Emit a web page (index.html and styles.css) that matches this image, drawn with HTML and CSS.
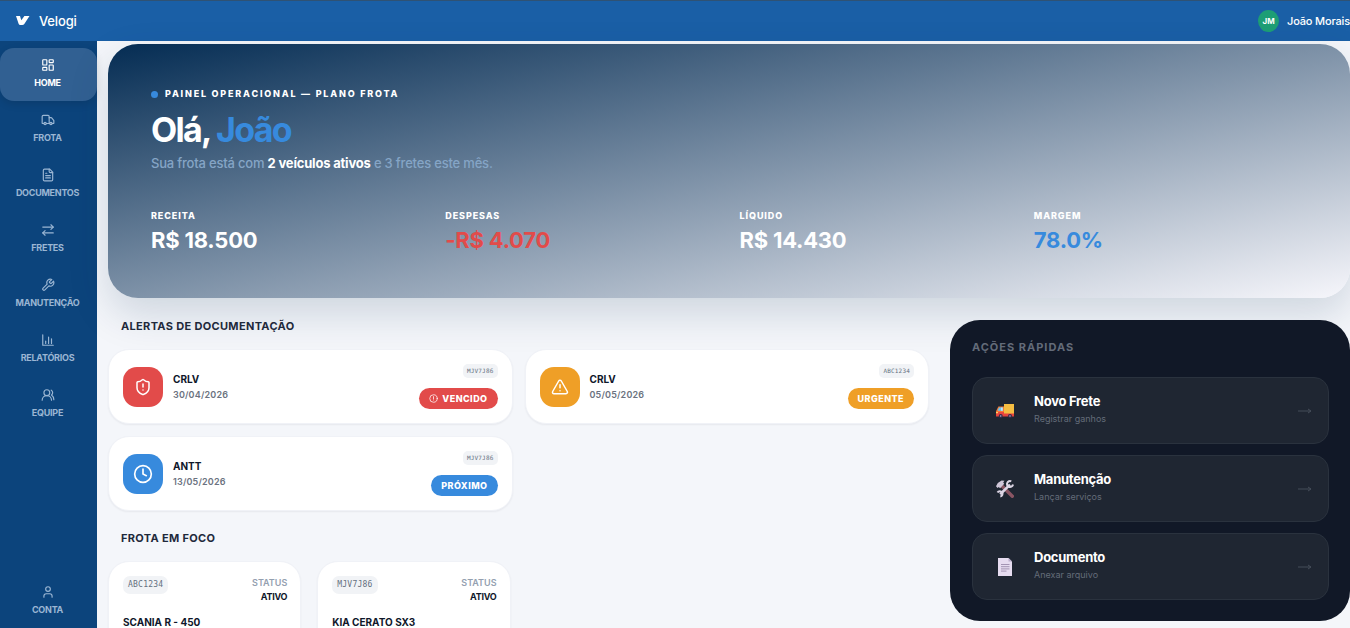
FILE: index.html
```html
<!DOCTYPE html>
<html lang="pt-BR">
<head>
  <meta charset="UTF-8">
  <meta name="viewport" content="width=device-width, initial-scale=1">
  <title>Velogi</title>
  <link rel="stylesheet" href="styles.css">
</head>
<body>

  <header class="topbar">
    <a href="#" class="brand">
      <svg class="brand-logo" viewBox="0 0 14 11" aria-hidden="true"><path d="M0 1h4l1.300 4.200L8.400 1H13.500L8.300 9Q7.600 10 6.200 10H4.300Q3 10 2.600 8.800z" fill="#fff"/></svg>
      <span>Velogi</span>
    </a>
    <div class="user">
      <span class="avatar">JM</span>
      <span>João Morais</span>
    </div>
  </header>

  <div class="layout">
    <nav class="sidebar">
      <a href="#" class="nav-item active">
        <svg class="icon" viewBox="0 0 24 24"><rect x="3" y="3" width="7" height="9" rx="1"/><rect x="14" y="3" width="7" height="5" rx="1"/><rect x="14" y="12" width="7" height="9" rx="1"/><rect x="3" y="16" width="7" height="5" rx="1"/></svg>
        <span>HOME</span>
      </a>
      <a href="#" class="nav-item">
        <svg class="icon" viewBox="0 0 24 24"><path d="M14 18V6a2 2 0 0 0-2-2H4a2 2 0 0 0-2 2v11a1 1 0 0 0 1 1h2"/><path d="M15 18H9"/><path d="M19 18h2a1 1 0 0 0 1-1v-3.650a1 1 0 0 0-.22-.624l-3.480-4.350A1 1 0 0 0 17.520 8H14"/><circle cx="17" cy="18" r="2"/><circle cx="7" cy="18" r="2"/></svg>
        <span>FROTA</span>
      </a>
      <a href="#" class="nav-item">
        <svg class="icon" viewBox="0 0 24 24"><path d="M15 2H6a2 2 0 0 0-2 2v16a2 2 0 0 0 2 2h12a2 2 0 0 0 2-2V7z"/><path d="M14 2v4a2 2 0 0 0 2 2h4"/><path d="M10 9H8"/><path d="M16 13H8"/><path d="M16 17H8"/></svg>
        <span>DOCUMENTOS</span>
      </a>
      <a href="#" class="nav-item">
        <svg class="icon" viewBox="0 0 24 24"><path d="m17 3 4 4-4 4"/><path d="M3 7h18"/><path d="m7 21-4-4 4-4"/><path d="M21 17H3"/></svg>
        <span>FRETES</span>
      </a>
      <a href="#" class="nav-item">
        <svg class="icon" viewBox="0 0 24 24"><path d="M14.700 6.300a1 1 0 0 0 0 1.400l1.600 1.600a1 1 0 0 0 1.400 0l3.770-3.770a6 6 0 0 1-7.940 7.940l-6.910 6.910a2.120 2.120 0 0 1-3-3l6.910-6.910a6 6 0 0 1 7.940-7.940l-3.760 3.760z"/></svg>
        <span>MANUTENÇÃO</span>
      </a>
      <a href="#" class="nav-item">
        <svg class="icon" viewBox="0 0 24 24"><path d="M3 3v18h18"/><path d="M8 18v-4"/><path d="M13 18V7"/><path d="M18 18V10"/></svg>
        <span>RELATÓRIOS</span>
      </a>
      <a href="#" class="nav-item">
        <svg class="icon" viewBox="0 0 24 24"><path d="M18 21a8 8 0 0 0-16 0"/><circle cx="10" cy="8" r="5"/><path d="M22 20c0-3.370-2-6.500-4-8a5 5 0 0 0-.45-8.300"/></svg>
        <span>EQUIPE</span>
      </a>
      <a href="#" class="nav-item nav-bottom">
        <svg class="icon" viewBox="0 0 24 24"><circle cx="12" cy="7" r="4"/><path d="M19 21v-2a4 4 0 0 0-4-4H9a4 4 0 0 0-4 4v2"/></svg>
        <span>CONTA</span>
      </a>
    </nav>

    <main class="content">
      <section class="hero">
        <p class="eyebrow">PAINEL OPERACIONAL — PLANO FROTA</p>
        <h1>Olá, <span class="blue">João</span></h1>
        <p class="subtitle">Sua frota está com <strong>2 veículos ativos</strong> e 3 fretes este mês.</p>
        <div class="stats">
          <div class="stat"><span class="stat-label">RECEITA</span><span class="stat-value">R$ 18.500</span></div>
          <div class="stat"><span class="stat-label">DESPESAS</span><span class="stat-value red">-R$ 4.070</span></div>
          <div class="stat"><span class="stat-label">LÍQUIDO</span><span class="stat-value">R$ 14.430</span></div>
          <div class="stat"><span class="stat-label">MARGEM</span><span class="stat-value blue">78.0%</span></div>
        </div>
      </section>

      <div class="columns">
        <div class="left">
          <h2>ALERTAS DE DOCUMENTAÇÃO</h2>
          <div class="alerts">
            <article class="card alert">
              <div class="alert-icon bg-red">
                <svg class="icon" viewBox="0 0 24 24"><path d="M20 13c0 5-3.500 7.500-7.660 8.950a1 1 0 0 1-.67-.01C7.500 20.500 4 18 4 13V6a1 1 0 0 1 1-1c2 0 4.500-1.200 6.240-2.720a1.170 1.170 0 0 1 1.520 0C14.510 3.810 17 5 19 5a1 1 0 0 1 1 1z"/><path d="M12 8v4"/><path d="M12 16h.01"/></svg>
              </div>
              <div class="alert-info"><h3>CRLV</h3><p>30/04/2026</p></div>
              <div class="alert-side">
                <span class="plate small">MJV7J86</span>
                <span class="badge bg-red"><svg class="icon" viewBox="0 0 24 24"><circle cx="12" cy="12" r="10"/><path d="M12 7v6"/><path d="M12 16h.01"/></svg>VENCIDO</span>
              </div>
            </article>
            <article class="card alert">
              <div class="alert-icon bg-orange">
                <svg class="icon" viewBox="0 0 24 24"><path d="m21.730 18-8-14a2 2 0 0 0-3.480 0l-8 14A2 2 0 0 0 4 21h16a2 2 0 0 0 1.730-3"/><path d="M12 9v4"/><path d="M12 17h.01"/></svg>
              </div>
              <div class="alert-info"><h3>CRLV</h3><p>05/05/2026</p></div>
              <div class="alert-side">
                <span class="plate small">ABC1234</span>
                <span class="badge bg-orange">URGENTE</span>
              </div>
            </article>
            <article class="card alert">
              <div class="alert-icon bg-blue">
                <svg class="icon" viewBox="0 0 24 24"><circle cx="12" cy="12" r="10"/><path d="M12 6v6l4 2"/></svg>
              </div>
              <div class="alert-info"><h3>ANTT</h3><p>13/05/2026</p></div>
              <div class="alert-side">
                <span class="plate small">MJV7J86</span>
                <span class="badge bg-blue">PRÓXIMO</span>
              </div>
            </article>
          </div>

          <h2>FROTA EM FOCO</h2>
          <div class="fleet">
            <article class="card vehicle">
              <div class="vehicle-top">
                <span class="plate">ABC1234</span>
                <div class="status"><span>STATUS</span><strong>ATIVO</strong></div>
              </div>
              <h3>SCANIA R - 450</h3>
            </article>
            <article class="card vehicle">
              <div class="vehicle-top">
                <span class="plate">MJV7J86</span>
                <div class="status"><span>STATUS</span><strong>ATIVO</strong></div>
              </div>
              <h3>KIA CERATO SX3</h3>
            </article>
          </div>
        </div>

        <aside class="quick">
          <h2>AÇÕES RÁPIDAS</h2>
          <button type="button" class="action">
            <svg class="emoji" viewBox="0 0 18 18" aria-hidden="true">
              <path d="M8 2h10v10H8z" fill="#f5bd42"/>
              <path d="M2.400 4.500H8V12H0V9.300z" fill="#f57a35"/>
              <path d="M3 5.500h3.800v3.300H1.600z" fill="#64c5f5"/>
              <path d="M5 5.500h1.800v3.300H5z" fill="#b9e4fa"/>
              <path d="M0 10h8v1.500h10v3H0z" fill="#e8443d"/>
              <path d="M0 10h2v1.300H0z" fill="#ffd45a"/>
              <circle cx="4.700" cy="14" r="2" fill="#39294b"/><circle cx="14" cy="14" r="2" fill="#39294b"/>
              <circle cx="4.700" cy="14" r=".8" fill="#b5a9c7"/><circle cx="14" cy="14" r=".8" fill="#b5a9c7"/>
            </svg>
            <span class="action-text"><strong>Novo Frete</strong><small>Registrar ganhos</small></span>
            <svg class="arrow" viewBox="0 0 14 8" aria-hidden="true"><path d="M0 4h13M10 2l3 2-3 2"/></svg>
          </button>
          <button type="button" class="action">
            <svg class="emoji" viewBox="0 0 18 18" aria-hidden="true">
              <path d="M5.500 5.500l10.800 10.800" stroke="#8a5563" stroke-width="3.400" stroke-linecap="round"/>
              <path d="M0 6.200L1.800 3 5.600.4l2.900.3-1.300 1.900 1 1.200-4.100 4.400-1.300-1.300L1.600 8z" fill="#cfc6d8"/>
              <path d="M4.200 14.200L14 4.600" stroke="#dcd5e4" stroke-width="2.600"/>
              <path d="M15.300 1.300A3 3 0 1 0 17 4.500" fill="none" stroke="#dcd5e4" stroke-width="2"/>
              <path d="M1.500 12.600A2.700 2.700 0 1 1 4.300 16.600" fill="none" stroke="#dcd5e4" stroke-width="2"/>
            </svg>
            <span class="action-text"><strong>Manutenção</strong><small>Lançar serviços</small></span>
            <svg class="arrow" viewBox="0 0 14 8" aria-hidden="true"><path d="M0 4h13M10 2l3 2-3 2"/></svg>
          </button>
          <button type="button" class="action">
            <svg class="emoji" viewBox="0 0 18 18" aria-hidden="true">
              <path d="M2 0h10.500L16 3.500V18H2z" fill="#e6dcf0"/>
              <path d="M12.500 0v3.500H16z" fill="#b9acc9"/>
              <path d="M5 6.500h8.500M5 8.700h8.500M5 10.900h8.500M5 13.100h5.500" stroke="#9b8bab" stroke-width=".9"/>
            </svg>
            <span class="action-text"><strong>Documento</strong><small>Anexar arquivo</small></span>
            <svg class="arrow" viewBox="0 0 14 8" aria-hidden="true"><path d="M0 4h13M10 2l3 2-3 2"/></svg>
          </button>
        </aside>
      </div>
    </main>
  </div>

</body>
</html>
```
FILE: styles.css
```css
* { box-sizing: border-box; }
body {
  margin: 0;
  height: 100vh;
  display: flex;
  flex-direction: column;
  overflow: hidden;
  font-family: Inter, "Liberation Sans", sans-serif;
  background: #f4f6fa;
  color: #0f172a;
}

h1, h2, h3, p { margin: 0; }
a { color: inherit; text-decoration: none; }

.icon {
  display: block;
  width: 14px;
  height: 14px;
  fill: none;
  stroke: currentColor;
  stroke-width: 2;
  stroke-linecap: round;
  stroke-linejoin: round;
}

.topbar {
  flex: none;
  display: flex;
  justify-content: space-between;
  align-items: center;
  height: 41px;
  padding: 0 0 1px 16px;
  background: #1a5fa6;
  border-top: 1px solid #2f5274;
  color: #fff;
  letter-spacing: -0.01em;
}

.brand {
  display: flex;
  align-items: center;
  gap: 9px;
  font-size: 13px;
  line-height: 18px;
  font-weight: 500;
}

.brand-logo { width: 14px; height: 11px; }

.user {
  display: flex;
  align-items: center;
  gap: 8px;
  font-size: 11px;
  font-weight: 500;
}

.avatar {
  display: grid;
  place-items: center;
  width: 21px;
  height: 22px;
  border-radius: 50%;
  background: #1d9e75;
  font-size: 8px;
  font-weight: 700;
}

.layout {
  flex: 1;
  display: flex;
  min-height: 0;
}

.sidebar {
  flex: none;
  display: flex;
  flex-direction: column;
  gap: 2px;
  width: 97px;
  padding: 7px 0 0;
  background: #0c447c;
}

.nav-item {
  display: flex;
  flex-direction: column;
  align-items: center;
  gap: 5px;
  padding: 10px 2px 12px 0;
  border-radius: 14px;
  color: #9bb6d3;
  font-size: 9px;
  line-height: 12px;
  font-weight: 700;
  letter-spacing: -0.03em;
}

.nav-item.active {
  background: #316092;
  color: #fff;
  box-shadow: 0 3px 8px rgba(0,0,0,0.12);
}

.nav-bottom { margin-top: auto; }

.content {
  flex: 1;
  min-width: 0;
  padding: 3px 0 0 11px;
}

.hero {
  padding: 43px 43px 44px;
  border-radius: 30px;
  background: linear-gradient(to bottom right, #042c53, #f6f6fb);
  box-shadow: 0 16px 40px rgba(4,44,83,0.16);
  color: #fff;
}

.eyebrow {
  display: flex;
  align-items: center;
  gap: 7px;
  font-size: 9px;
  line-height: 14px;
  font-weight: 800;
  letter-spacing: 0.2em;
}

.eyebrow::before {
  content: "";
  width: 7px;
  height: 7px;
  border-radius: 50%;
  background: #378add;
}

h1 {
  margin-top: 8px;
  font-size: 34px;
  line-height: 42px;
  font-weight: 700;
  letter-spacing: -0.05em;
}

.blue { color: #378add; }
.red { color: #e24b4a; }

.subtitle {
  margin-top: 4px;
  font-size: 13px;
  line-height: 16px;
  font-weight: 500;
  letter-spacing: -0.015em;
  color: #85a5c6;
}

.subtitle strong { color: #fff; }

.stats {
  display: grid;
  grid-template-columns: repeat(4, 1fr);
  gap: 21px;
  margin-top: 38px;
}

.stat {
  display: flex;
  flex-direction: column;
  gap: 4px;
}

.stat-label {
  font-size: 9px;
  line-height: 14px;
  font-weight: 800;
  letter-spacing: 0.1em;
}

.stat-value {
  font-size: 22px;
  line-height: 27px;
  font-weight: 700;
  letter-spacing: -0.01em;
}

.columns {
  display: grid;
  grid-template-columns: minmax(0, 1fr) 400px;
  gap: 21px;
  align-items: start;
  margin-top: 22px;
}

h2 {
  padding-left: 13px;
  font-size: 11px;
  line-height: 12px;
  font-weight: 700;
  letter-spacing: 0.03em;
  color: #1e293b;
}

.alerts {
  display: grid;
  grid-template-columns: 1fr 1fr;
  gap: 12px;
  margin: 17px 0 21px;
}

.card {
  background: #fff;
  border: 1px solid #f0f2f7;
  border-radius: 21px;
  box-shadow: 0 1px 2px rgba(15,23,42,0.06);
}

.alert {
  display: flex;
  align-items: center;
  gap: 10px;
  padding: 14px;
}

.alert-icon {
  display: grid;
  place-items: center;
  width: 40px;
  height: 40px;
  border-radius: 14px;
  color: #fff;
}

.alert-icon .icon { width: 18px; height: 18px; }
.alert-icon.bg-blue .icon { width: 20px; height: 20px; }

.bg-red { background: #e24b4a; }
.bg-orange { background: #ef9f27; }
.bg-blue { background: #378add; }

.alert-info { flex: 1; }

h3 {
  font-size: 10px;
  line-height: 15px;
  font-weight: 700;
}

.alert-info p {
  font-size: 9px;
  line-height: 15px;
  font-weight: 600;
  letter-spacing: 0.02em;
  color: #6b7280;
}

.alert-side {
  display: flex;
  flex-direction: column;
  align-items: flex-end;
  gap: 10px;
}

.plate {
  padding: 4px 5px;
  border-radius: 7px;
  background: #f1f3f6;
  color: #64707f;
  font-family: "DejaVu Sans Mono", monospace;
  font-size: 8px;
  line-height: 10px;
  letter-spacing: 0.03em;
}

.plate.small {
  padding: 2px 4px;
  border-radius: 5px;
  font-size: 6px;
}

.badge {
  display: flex;
  align-items: center;
  gap: 4px;
  padding: 4px 10px;
  border-radius: 11px;
  color: #fff;
  font-size: 9px;
  line-height: 13px;
  font-weight: 800;
  letter-spacing: 0.05em;
}

.badge .icon { width: 9px; height: 9px; }

.fleet {
  display: grid;
  grid-template-columns: repeat(4, 1fr);
  gap: 16px;
  margin-top: 17px;
}

.vehicle { padding: 14px 13px 40px 14px; }

.vehicle-top {
  display: flex;
  justify-content: space-between;
  align-items: flex-start;
  margin-bottom: 11px;
}

.status {
  display: flex;
  flex-direction: column;
  align-items: flex-end;
  font-size: 9px;
  line-height: 14px;
  font-weight: 600;
  color: #94a0b0;
}

.status strong {
  font-weight: 700;
  letter-spacing: -0.03em;
  color: #0f172a;
}

.quick {
  display: flex;
  flex-direction: column;
  gap: 11px;
  padding: 21px 21px 21px 22px;
  border-radius: 30px;
  background: #111827;
}

.quick h2 {
  margin-bottom: 13px;
  padding: 0;
  letter-spacing: 0.09em;
  color: #636b79;
}

.action {
  display: flex;
  align-items: center;
  width: 100%;
  padding: 14px 16px 14px 23px;
  border: 1px solid #2a323e;
  border-radius: 15px;
  background: #1f2632;
  color: #fff;
  font-family: inherit;
  text-align: left;
  cursor: pointer;
}

.emoji { width: 18px; height: 18px; }

.action-text {
  flex: 1;
  display: flex;
  flex-direction: column;
  margin-left: 20px;
  padding-bottom: 3px;
}

.action strong {
  font-size: 13px;
  line-height: 19px;
  letter-spacing: -0.02em;
}

.action small {
  font-size: 9px;
  line-height: 15px;
  color: #646c79;
}

.arrow {
  width: 14px;
  height: 8px;
  fill: none;
  stroke: #454d59;
}
```
